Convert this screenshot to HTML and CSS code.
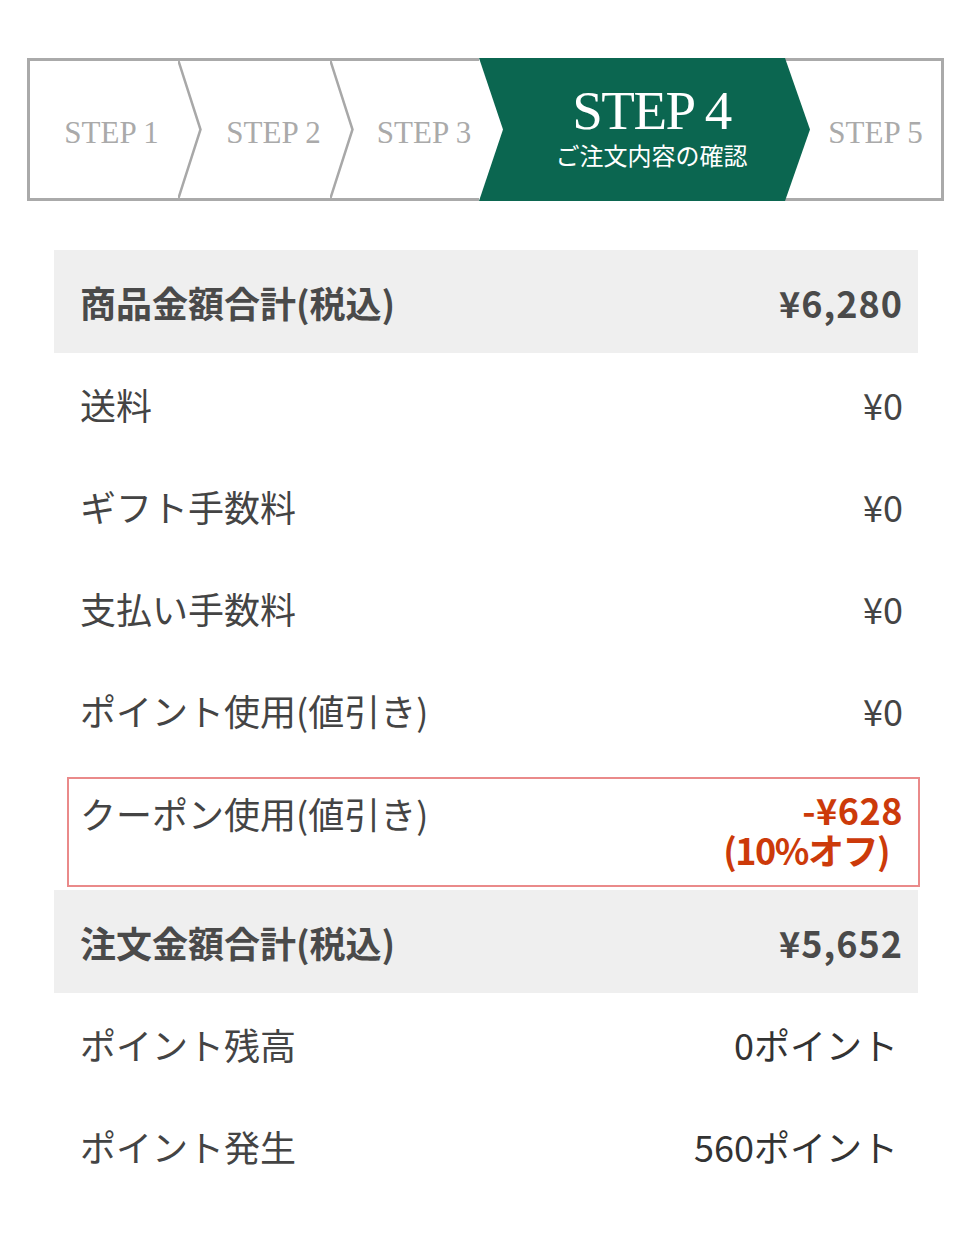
FILE: index.html
```html
<!DOCTYPE html>
<html lang="ja">
<head>
  <meta charset="UTF-8">
  <meta name="viewport" content="width=device-width, initial-scale=1.0">
  <title>ご注文内容の確認</title>
  <link rel="stylesheet" href="styles.css">
</head>
<body>
  <!-- Steps -->
  <div class="stepper">
    <div class="step step-1">STEP 1</div>
    <div class="sep">
      <svg viewBox="0 0 24 137" preserveAspectRatio="none"><polyline points="0.5,0 22.5,68.5 0.5,137" /></svg>
    </div>
    <div class="step step-2">STEP 2</div>
    <div class="sep">
      <svg viewBox="0 0 24 137" preserveAspectRatio="none"><polyline points="0.5,0 22.5,68.5 0.5,137" /></svg>
    </div>
    <div class="step step-3">STEP 3</div>
    <div class="sep sep-in">
      <svg viewBox="0 0 24 143" preserveAspectRatio="none"><polygon points="0,0 24,71.5 0,143" /></svg>
    </div>
    <div class="step current">
      <span class="step-num">STEP 4</span>
      <span class="step-name">ご注文内容の確認</span>
    </div>
    <div class="sep sep-out">
      <svg viewBox="0 0 25 143" preserveAspectRatio="none">
        <rect class="edge" x="0" y="0" width="25" height="3" />
        <rect class="edge" x="0" y="140" width="25" height="3" />
        <polygon points="0,0 25,71.5 0,143" />
      </svg>
    </div>
    <div class="step step-5">STEP 5</div>
  </div>

  <!-- Totals -->
  <div class="summary">
    <div class="row total">
      <span class="label">商品金額合計(税込)</span>
      <span class="value">¥6,280</span>
    </div>
    <div class="row">
      <span class="label">送料</span>
      <span class="value">¥0</span>
    </div>
    <div class="row">
      <span class="label">ギフト手数料</span>
      <span class="value">¥0</span>
    </div>
    <div class="row">
      <span class="label">支払い手数料</span>
      <span class="value">¥0</span>
    </div>
    <div class="row">
      <span class="label">ポイント使用(値引き)</span>
      <span class="value">¥0</span>
    </div>
    <div class="row coupon">
      <span class="label">クーポン使用(値引き)</span>
      <div class="value discount">
        <span class="amount">-¥628</span>
        <span class="rate">(10%オフ)</span>
      </div>
    </div>
    <div class="row total">
      <span class="label">注文金額合計(税込)</span>
      <span class="value">¥5,652</span>
    </div>
    <div class="row">
      <span class="label">ポイント残高</span>
      <span class="value points">0ポイント</span>
    </div>
    <div class="row">
      <span class="label">ポイント発生</span>
      <span class="value points">560ポイント</span>
    </div>
  </div>
</body>
</html>
```

FILE: styles.css
```css
body {
  margin: 0;
  font-family: "Noto Sans CJK JP", "Noto Sans", sans-serif;
  color: #444;
  background-color: #fff;
}

/* steps */
.stepper {
  display: flex;
  width: 911px;
  height: 137px;
  margin: 58px 0 0 27px;
  border: 3px solid #aaa;
}

.step {
  display: flex;
  align-items: center;
  justify-content: center;
  padding-left: 15px;
  padding-top: 6px;
  box-sizing: border-box;
  font-family: "Liberation Serif", serif;
  font-size: 31px;
  color: #aaa;
}

.step-1 { width: 148px; }
.step-2 { width: 128px; }
.step-3 { width: 125px; }
.step-5 { flex: 1; padding-left: 0; }

.sep {
  width: 24px;
  flex-shrink: 0;
}

.sep svg {
  display: block;
  width: 100%;
  height: 100%;
}

.sep polyline {
  fill: none;
  stroke: #a8a8a8;
  stroke-width: 2.5;
}

.sep-in,
.sep-out {
  margin: -3px 0;
}

.sep-in {
  background-color: #0b6650;
}

.sep-in polygon {
  fill: #fff;
}

.sep-out {
  width: 25px;
}

.sep-out .edge {
  fill: #aaa;
}

.sep-out polygon {
  fill: #0b6650;
}

.current {
  width: 282px;
  margin: -3px 0;
  padding-top: 0;
  padding-bottom: 8px;
  flex-direction: column;
  background-color: #0b6650;
  color: #fff;
}

.step-num {
  font-size: 55px;
  line-height: 58px;
  letter-spacing: -1.5px;
}

.step-name {
  font-family: "Noto Sans CJK JP", sans-serif;
  font-size: 24px;
  line-height: 30px;
}

/* totals */
.summary {
  width: 864px;
  margin: 49px 0 0 54px;
}

.row {
  display: flex;
  justify-content: space-between;
  align-items: center;
  height: 102px;
  padding: 0 15px 0 26px;
  font-size: 36px;
}

.total {
  height: 103px;
  background-color: #efefef;
  font-weight: bold;
  color: #4a4a4a;
}

.total .value {
  letter-spacing: 1px;
}

.value {
  text-align: right;
}

.coupon {
  height: 110px;
  margin: 16px -2px 3px 13px;
  padding: 8px 15px 0 11px;
  align-items: flex-start;
  border: 2px solid #ea8a8a;
  box-sizing: border-box;
}

.discount {
  display: flex;
  flex-direction: column;
  align-items: flex-end;
  margin-top: 2px;
  font-weight: bold;
  color: #cc3a0a;
  line-height: 40px;
}

.amount {
  letter-spacing: 0.5px;
}

.rate {
  margin-right: 14px;
  letter-spacing: -1.5px;
}

.points {
  margin-right: 5px;
  color: #333;
}
```
